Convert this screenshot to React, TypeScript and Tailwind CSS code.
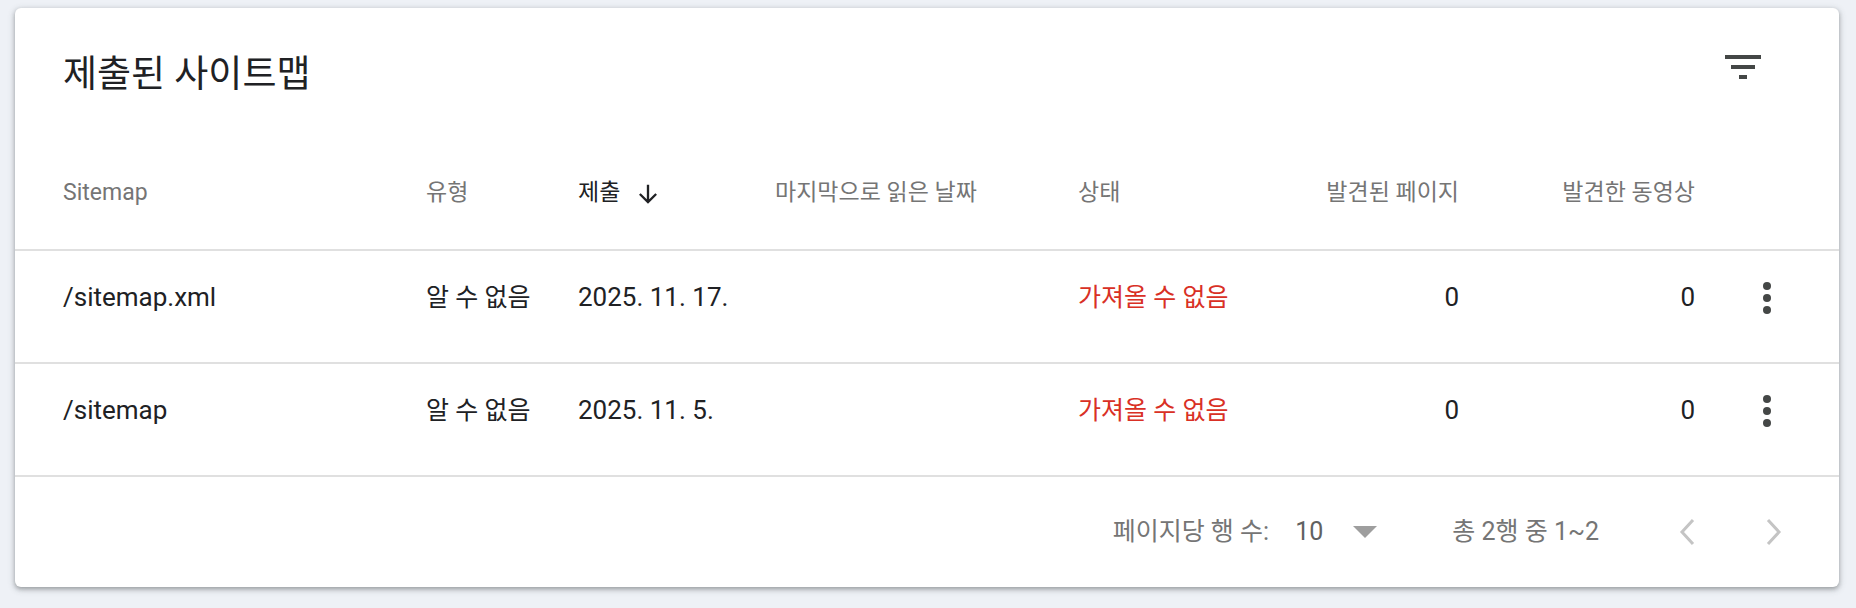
const rows = [
  { path: "/sitemap.xml", type: "알 수 없음", submitted: "2025. 11. 17.", status: "가져올 수 없음", pages: 0, videos: 0 },
  { path: "/sitemap", type: "알 수 없음", submitted: "2025. 11. 5.", status: "가져올 수 없음", pages: 0, videos: 0 },
];

const cols = "grid grid-cols-[363px_152px_197px_303px_190px_191px_236px_1fr] items-center";

function FilterIcon() {
  return (
    <svg width="48" height="48" viewBox="0 0 24 24" fill="#444746">
      <path d="M10 18h4v-2h-4v2zM3 6v2h18V6H3zm3 7h12v-2H6v2z" />
    </svg>
  );
}

function MoreIcon() {
  return (
    <svg width="48" height="48" viewBox="0 0 24 24" fill="#444746">
      <circle cx="12" cy="6" r="2" />
      <circle cx="12" cy="12" r="2" />
      <circle cx="12" cy="18" r="2" />
    </svg>
  );
}

function ArrowDown() {
  return (
    <svg width="28" height="28" viewBox="0 0 24 24" fill="none" stroke="#202124" strokeWidth="2">
      <path d="M12 4v15M5 12l7 7 7-7" />
    </svg>
  );
}

function Chevron({ dir }: { dir: "left" | "right" }) {
  return (
    <svg width="48" height="48" viewBox="0 0 48 48" fill="none" stroke="#c4c4c4" strokeWidth="3">
      {dir === "left" ? <path d="M30 12L19 24l11 12" /> : <path d="M18 12l11 12-11 12" />}
    </svg>
  );
}

export default function App() {
  return (
    <div className="w-[1856px] h-[608px] bg-[#eef1f6] pl-[15px] pr-[17px] pt-[8px] font-[Roboto,'Noto_Sans_CJK_KR',sans-serif]">
      <div className="h-[579px] bg-white rounded-[6px] shadow-[0_2px_4px_rgba(60,64,67,0.4),0_2px_6px_2px_rgba(60,64,67,0.12)] flex flex-col">
        {/* title */}
        <div className="h-[130px] flex items-start justify-between pl-[48px] pr-[72px]">
          <h1 className="pt-[47px] text-[37px] leading-[40px] text-[#202124] font-normal">제출된 사이트맵</h1>
          <button className="mt-[35px]">
            <FilterIcon />
          </button>
        </div>

        {/* header */}
        <div className={`${cols} h-[113px] pl-[48px] border-b-2 border-[#e0e0e0] text-[23px] text-[#757575]`}>
          <div>Sitemap</div>
          <div>유형</div>
          <div className="flex items-center gap-[14px] text-[#202124]">
            <span>제출</span>
            <ArrowDown />
          </div>
          <div>마지막으로 읽은 날짜</div>
          <div>상태</div>
          <div className="text-right">발견된 페이지</div>
          <div className="text-right">발견한 동영상</div>
          <div />
        </div>

        {/* rows */}
        {rows.map((r) => (
          <div
            key={r.path}
            className={`${cols} h-[113px] pl-[48px] pb-[18px] border-b-2 border-[#e0e0e0] text-[26px] text-[#202124]`}
          >
            <div>{r.path}</div>
            <div className="text-[25px]">{r.type}</div>
            <div>{r.submitted}</div>
            <div />
            <div className="text-[25px] text-[#d93025]">{r.status}</div>
            <div className="text-right">{r.pages}</div>
            <div className="text-right">{r.videos}</div>
            <div className="pl-[48px] flex">
              <button>
                <MoreIcon />
              </button>
            </div>
          </div>
        ))}

        {/* footer */}
        <div className="flex-1 flex items-center justify-end pr-[41px] text-[25px] text-[#757575]">
          <span>페이지당 행 수:</span>
          <span className="ml-[26px] text-[#616161]">10</span>
          <svg className="ml-[30px]" width="24" height="12" viewBox="0 0 24 12" fill="#9e9e9e">
            <path d="M0 0h24L12 12z" />
          </svg>
          <span className="ml-[75px]">총 2행 중 1~2</span>
          <button className="ml-[64px]">
            <Chevron dir="left" />
          </button>
          <button className="ml-[39px]">
            <Chevron dir="right" />
          </button>
        </div>
      </div>
    </div>
  );
}
